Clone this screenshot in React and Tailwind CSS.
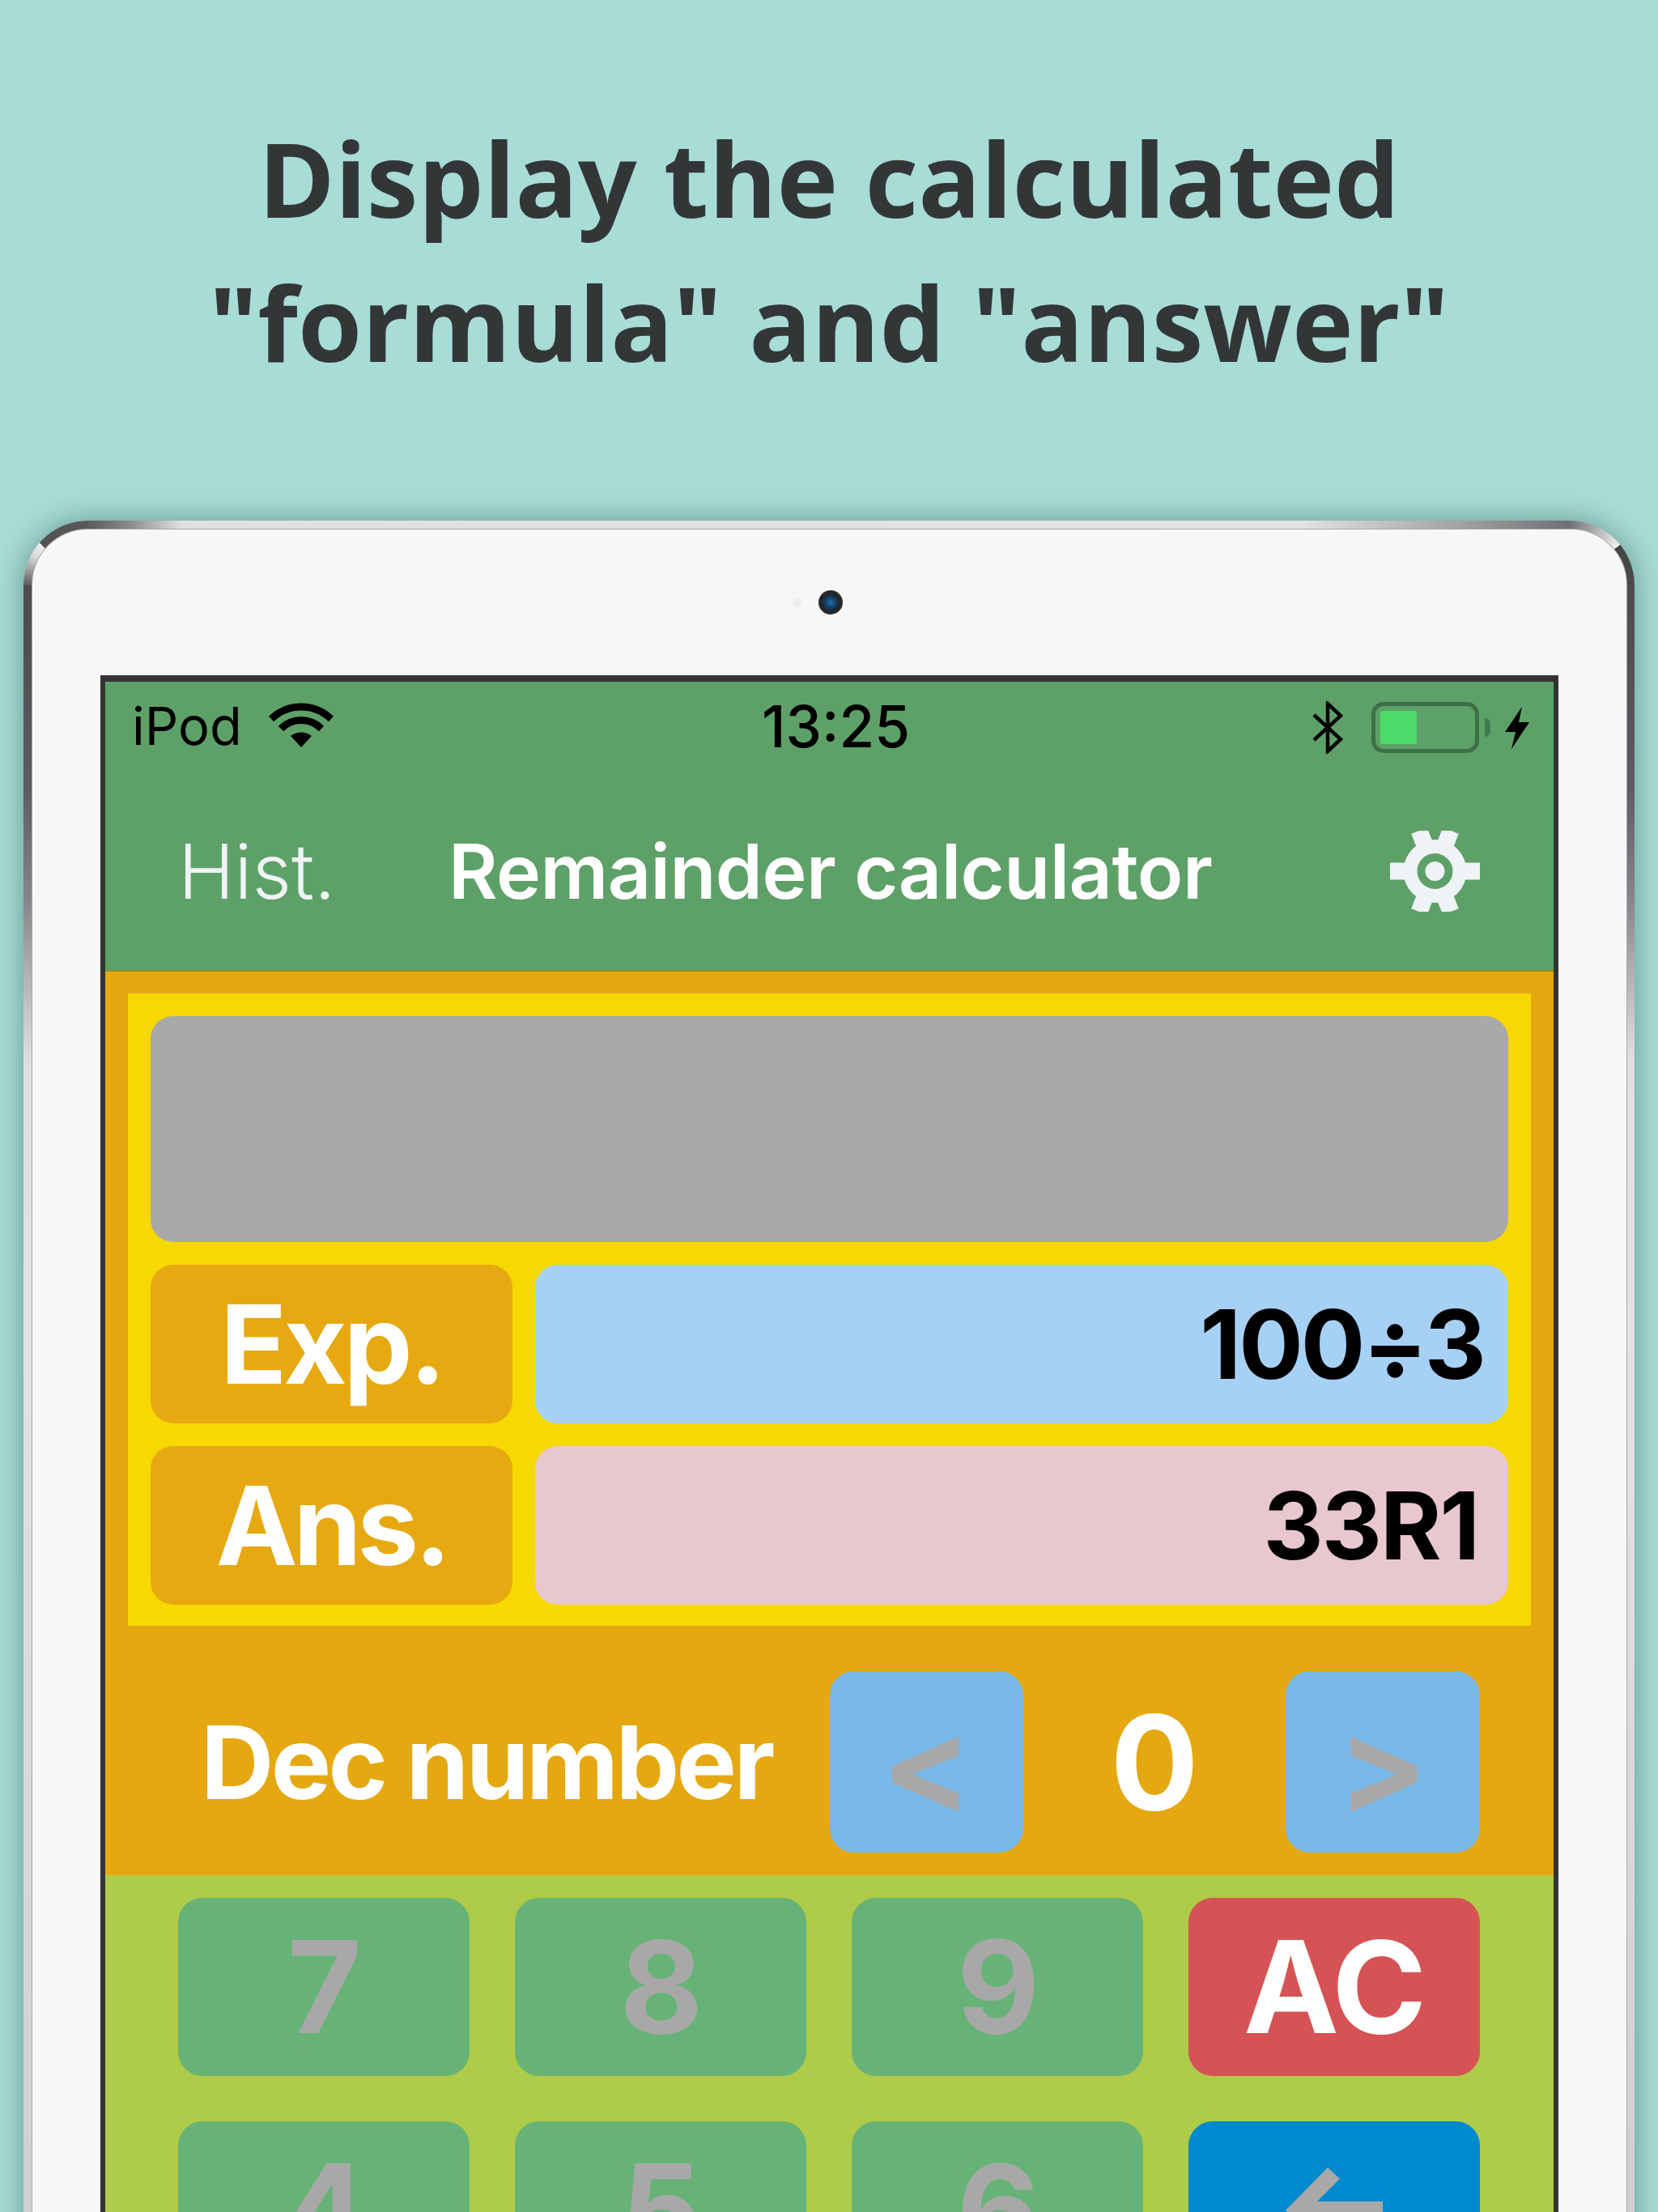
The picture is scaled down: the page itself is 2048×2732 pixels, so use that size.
const bezel = "bg-[conic-gradient(from_270deg_at_100%_100%,#5c5c5c_0deg,#d8d8d8_28deg,#eeeeee_41deg,#505050_41deg,#5a5a5a_90deg),conic-gradient(from_0deg_at_0%_100%,#707074_0deg,#c8c8c8_35deg,#f2f2f2_51deg,#444444_51deg,#4a4a4a_90deg),linear-gradient(90deg,#5c5c5c_0px,#8a8a8a_50px,#e0e0e0_115px,#e2e2e2_1500px,#a0a0a0_1700px,#707074_100%),linear-gradient(180deg,#4c4c4c_80px,#5c5c62_330px,#85858a_467px,#b0b0b0_557px,#dedede_664px,#e2e2e2_1000px,#d0d0d0_2089px)] bg-[length:80px_80px,80px_80px,calc(100%-160px)_12px,100%_100%] bg-[position:0_0,100%_0,80px_0,0_0] bg-no-repeat";

function Wifi() {
  return (
    <svg width="80" height="56" viewBox="0 0 80 56" className="ml-[33px] mt-[-4px]">
      <path d="M3 21C24 1 56 1 77 21" fill="none" stroke="#000" strokeWidth="9" />
      <path d="M15 33C29 19 51 19 65 33" fill="none" stroke="#000" strokeWidth="9" />
      <path d="M27 42C34 36 46 36 53 42L40 56Z" fill="#000" />
    </svg>
  );
}

function StatusRight() {
  return (
    <div className="flex items-center">
      <svg width="38" height="65" viewBox="0 0 38 65" className="mr-[35px]">
        <path d="M2 17L35 47L19 62V3L35 18L2 48" fill="none" stroke="#000" strokeWidth="4.5" />
      </svg>
      <div className="w-[133px] h-[63px] rounded-[15px] border-[5px] border-[#3d7049] p-[6px] mr-[7px]">
        <div className="w-[45px] h-full bg-[#4cdb68] rounded-[3px]" />
      </div>
      <div className="w-[7px] h-[23px] bg-[#3f7a4c] rounded-r-full mr-[18px]" />
      <svg width="30" height="52" viewBox="0 0 30 52">
        <path d="M21 0L0 31H13L8 52L30 19H17Z" fill="#000" />
      </svg>
    </div>
  );
}

function Gear() {
  return (
    <svg width="111" height="100" viewBox="0 0 111 100">
      <g stroke="#eff3f6" strokeWidth="21">
        <path d="M0 50H111" />
        <path d="M36 0L75 100" />
        <path d="M75 0L36 100" />
      </g>
      <circle cx="55.5" cy="50" r="39" fill="#eff3f6" />
      <circle cx="55.5" cy="50" r="17" fill="none" stroke="#5ea168" strokeWidth="10" />
    </svg>
  );
}

function Key({ children, className }) {
  return (
    <div className={"h-[220px] rounded-[30px] flex items-center justify-center text-[158px] leading-none font-bold tracking-[-2px] " + className}>
      {children}
    </div>
  );
}

export default function App() {
  return (
    <div className="w-[2048px] h-[2732px] overflow-hidden bg-[#a8dcd6]">
      <header className="h-[643px] pt-[131px] text-center font-['Open_Sans',sans-serif] font-bold text-[128px] leading-[178px] text-[#333637]">
        <p>Display the calculated</p>
        <p>"formula" and "answer"</p>
      </header>
      <div className={"ml-[29px] w-[1990px] h-[2300px] rounded-[80px] pl-[11px] pr-[10px] pt-[11px] shadow-[0_0_36px_rgba(0,50,50,0.4)] " + bezel}>
        <div className="h-full rounded-t-[68px] bg-[#f6f7f9] px-[84px] shadow-[0_0_0_1px_#a9a9a9]">
          <div className="h-[180px] flex items-center justify-center">
            <div className="flex items-center gap-[20px] mt-[-1px] mr-[8px]">
              <div className="w-[12px] h-[12px] rounded-full bg-[#eceef0] ml-[-22px]" />
              <div className="w-[30px] h-[30px] rounded-full bg-[radial-gradient(circle,#1c6fb0_0%,#123f66_30%,#222326_52%,#3a3a3c_100%)]" />
            </div>
          </div>
          <div className="border-x-[6px] border-t-[8px] border-[#333535] h-[2000px] font-['Inter',sans-serif]">
            <div className="h-[358px] bg-[#5ea168] border-b-[2px] border-[#8f8f2c]">
              <div className="h-[121px] pt-[23px] px-[33px] relative flex justify-between items-start text-[65px] leading-[64px] text-black">
                <div className="flex items-center">
                  <span>iPod</span>
                  <Wifi />
                </div>
                <span className="absolute left-[811px] top-[23px] font-medium text-[71px]">13:25</span>
                <div className="mr-[-3px] mt-[1px]"><StatusRight /></div>
              </div>
              <div className="flex items-center h-[226px] pl-[90px] pr-[91px] leading-none">
                <span className="w-[334px] font-light text-[94px] text-[#f0f3f5]">Hist.</span>
                <span className="flex-1 font-semibold tracking-[-0.5px] text-[93px] text-white">Remainder calculator</span>
                <Gear />
              </div>
            </div>
            <div className="bg-[#e5a811] px-[28px] pt-[27px]">
              <div className="bg-[#f6d900] p-[28px] pb-[26px] flex flex-col gap-[28px]">
                <div className="h-[279px] rounded-[28px] bg-[#a9a9a9]" />
                <div className="flex gap-[28px] h-[196px]">
                  <div className="w-[447px] rounded-[28px] bg-[#e7a911] flex items-center justify-center text-white font-bold tracking-[-4px] text-[135px] leading-none">Exp.</div>
                  <div className="flex-1 rounded-[28px] bg-[#a6d1f4] flex items-center justify-end pr-[30px] text-black font-bold tracking-[-3px] text-[118px] leading-none">100÷3</div>
                </div>
                <div className="flex gap-[28px] h-[196px]">
                  <div className="w-[447px] rounded-[28px] bg-[#e7a911] flex items-center justify-center text-white font-bold tracking-[-5px] text-[135px] leading-none">Ans.</div>
                  <div className="flex-1 rounded-[28px] bg-[#e9c7cf] flex items-center justify-end pr-[37px] text-black font-bold tracking-[-2px] text-[115px] leading-none">33R1</div>
                </div>
              </div>
              <div className="h-[308px] pt-[28px] flex items-center pl-[90px] pr-[63px]">
                <span className="w-[777px] text-white font-bold tracking-[-3.6px] text-[125px] leading-none">Dec number</span>
                <div className="w-[239px] h-[224px] pt-[6px] rounded-[30px] bg-[#78b9e9] flex items-center justify-center text-[#a8a8a8] font-bold text-[165px] leading-none">&lt;</div>
                <span className="flex-1 text-center text-white font-bold text-[162px] leading-none">0</span>
                <div className="w-[240px] h-[224px] pt-[6px] rounded-[30px] bg-[#78b9e9] flex items-center justify-center text-[#a8a8a8] font-bold text-[165px] leading-none">&gt;</div>
              </div>
            </div>
            <div className="h-[500px] bg-[#aecb49] pt-[28px] pl-[90px] pr-[91px] grid grid-cols-4 gap-x-[56px] gap-y-[56px] content-start">
              <Key className="bg-[#67b377] text-[#a8a8a8]">7</Key>
              <Key className="bg-[#67b377] text-[#a8a8a8]">8</Key>
              <Key className="bg-[#67b377] text-[#a8a8a8]">9</Key>
              <Key className="bg-[#d55354] text-white">AC</Key>
              <Key className="bg-[#67b377] text-[#a8a8a8]">4</Key>
              <Key className="bg-[#67b377] text-[#a8a8a8]">5</Key>
              <Key className="bg-[#67b377] text-[#a8a8a8]">6</Key>
              <Key className="bg-[#0089cd]">
                <svg width="120" height="112" viewBox="0 0 120 112">
                  <path d="M52 3L67 17L39 45H120V67H39L67 95L52 109L0 56Z" fill="#a8a8a8" />
                </svg>
              </Key>
            </div>
          </div>
        </div>
      </div>
    </div>
  );
}
